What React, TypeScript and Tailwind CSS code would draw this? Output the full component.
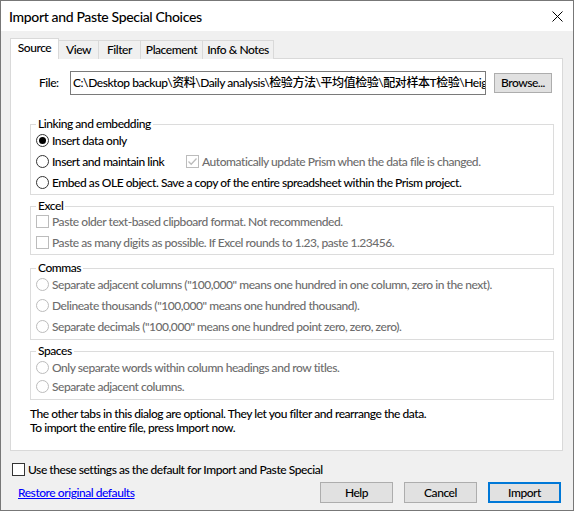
import clsx from "clsx";

const FILE_PATH =
  "C:\\Desktop backup\\资料\\Daily analysis\\检验方法\\平均值检验\\配对样本T检验\\Height.xlsx";

function Radio({ checked, disabled }: { checked?: boolean; disabled?: boolean }) {
  return (
    <span
      className={clsx(
        "flex h-[13px] w-[13px] shrink-0 items-center justify-center rounded-full border bg-white",
        disabled ? "border-[#bcbcbc]" : "border-[#333333]",
      )}
    >
      {checked && <span className="h-[7px] w-[7px] rounded-full bg-black" />}
    </span>
  );
}

function Check({ checked, disabled }: { checked?: boolean; disabled?: boolean }) {
  return (
    <span
      className={clsx(
        "flex h-[13px] w-[13px] shrink-0 items-center justify-center border bg-white",
        disabled ? "border-[#bcbcbc]" : "border-[#333333]",
      )}
    >
      {checked && (
        <svg width="11" height="11" viewBox="0 0 11 11">
          <path
            d="M1.5 5.5 L4.2 8.2 L9.5 2.5"
            fill="none"
            stroke={disabled ? "#bcbcbc" : "#000"}
            strokeWidth="1.3"
          />
        </svg>
      )}
    </span>
  );
}

function Option({
  kind,
  label,
  checked,
  disabled,
  short,
}: {
  kind: "radio" | "check";
  label: string;
  checked?: boolean;
  disabled?: boolean;
  short?: boolean;
}) {
  return (
    <div className={clsx("flex items-center gap-[3px]", short ? "h-[19px]" : "h-[21px]")}>
      {kind === "radio" ? (
        <Radio checked={checked} disabled={disabled} />
      ) : (
        <Check checked={checked} disabled={disabled} />
      )}
      <span className={clsx("whitespace-nowrap", disabled ? "text-[#6d6d6d]" : "text-black")}>
        {label}
      </span>
    </div>
  );
}

function Group({
  title,
  className,
  children,
}: {
  title: string;
  className: string;
  children: React.ReactNode;
}) {
  return (
    <fieldset className={clsx("border border-[#dcdcdc] px-[5px]", className)}>
      <legend className="px-[2px] leading-[16px]">{title}</legend>
      {children}
    </fieldset>
  );
}

const TABS = [
  { name: "View", width: "w-[40px]" },
  { name: "Filter", width: "w-[42px]" },
  { name: "Placement", width: "w-[62px]" },
  { name: "Info & Notes", width: "w-[71px]" },
];

function Button({ label, primary }: { label: string; primary?: boolean }) {
  return (
    <button
      className={clsx(
        "h-[21px] w-[73px] bg-[#e1e1e1] text-black",
        primary ? "border-2 border-[#0078d7]" : "border border-[#adadad]",
      )}
    >
      {label}
    </button>
  );
}

export default function App() {
  return (
    <div className="h-[511px] w-[574px] overflow-hidden border border-[#777777] bg-[#f0f0f0] font-['Lato','Noto_Sans_CJK_SC',sans-serif] text-[12px] font-medium tracking-[-0.45px] text-black">
      {/* title bar */}
      <div className="flex h-[30px] items-center justify-between bg-white pl-[8px] pr-[10px]">
        <span className="text-[14px] tracking-[-0.35px]">Import and Paste Special Choices</span>
        <svg width="11" height="11" viewBox="0 0 11 11">
          <path d="M0.5 0.5 L10.5 10.5 M10.5 0.5 L0.5 10.5" stroke="#000" strokeWidth="1" />
        </svg>
      </div>

      <div className="px-[9px] pt-[7px]">
        {/* tabs */}
        <div className="-mb-px flex items-end whitespace-nowrap">
          <div className="relative z-10 flex h-[21px] w-[49px] items-center justify-center border-x border-t border-[#d9d9d9] bg-white pb-[2px]">
            Source
          </div>
          {TABS.map((t) => (
            <div
              key={t.name}
              className={clsx(
                "flex h-[19px] items-center justify-center border-r border-t border-[#d9d9d9] bg-[#f0f0f0] pb-[1px]",
                t.width,
              )}
            >
              {t.name}
            </div>
          ))}
        </div>

        {/* panel */}
        <div className="h-[393px] w-[553px] border border-[#d9d9d9] bg-white pl-[19px] pr-[8px] pt-[12px]">
          <div className="ml-[9px] mr-[2px] flex items-center">
            <span className="w-[31px]">File:</span>
            <div className="flex h-[24px] w-[416px] items-center overflow-hidden whitespace-nowrap border border-[#7a7a7a] pl-[2px]">
              {FILE_PATH}
            </div>
            <button className="ml-[8px] h-[20px] w-[58px] border border-[#adadad] bg-[#e1e1e1]">
              Browse...
            </button>
          </div>

          <Group title="Linking and embedding" className="mt-[21px] h-[79px]">
            <div className="-mt-[2px]">
              <Option kind="radio" label="Insert data only" checked />
              <div className="flex items-center">
                <div className="w-[150px]">
                  <Option kind="radio" label="Insert and maintain link" />
                </div>
                <Option
                  kind="check"
                  label="Automatically update Prism when the data file is changed."
                  checked
                  disabled
                />
              </div>
              <Option
                kind="radio"
                label="Embed as OLE object. Save a copy of the entire spreadsheet within the Prism project."
              />
            </div>
          </Group>

          <Group title="Excel" className="mt-[3px] h-[57px]">
            <div className="-mt-[3px]">
              <Option kind="check" label="Paste older text-based clipboard format. Not recommended." disabled />
              <Option
                kind="check"
                label="Paste as many digits as possible. If Excel rounds to 1.23, paste 1.23456."
                disabled
              />
            </div>
          </Group>

          <Group title="Commas" className="mt-[5px] h-[80px]">
            <div className="-mt-[2px]">
              <Option
                kind="radio"
                label={'Separate adjacent columns ("100,000" means one hundred in one column, zero in the next).'}
                disabled
              />
              <Option
                kind="radio"
                label={'Delineate thousands ("100,000" means one hundred thousand).'}
                disabled
              />
              <Option
                kind="radio"
                label={'Separate decimals ("100,000" means one hundred point zero, zero, zero).'}
                disabled
              />
            </div>
          </Group>

          <Group title="Spaces" className="mt-[3px] h-[57px]">
            <div className="-mt-[1px]">
              <Option
                kind="radio"
                label="Only separate words within column headings and row titles."
                disabled
                short
              />
              <Option kind="radio" label="Separate adjacent columns." disabled short />
            </div>
          </Group>

          <p className="mt-[7px] leading-[14px]">
            The other tabs in this dialog are optional. They let you filter and rearrange the data.
            <br />
            To import the entire file, press Import now.
          </p>
        </div>
      </div>

      {/* footer */}
      <div className="mt-[12px] flex h-[13px] items-center gap-[3px] pl-[11px]">
        <Check />
        <span>Use these settings as the default for Import and Paste Special</span>
      </div>
      <div className="mt-[6px] flex h-[21px] items-center justify-between pl-[17px] pr-[12px]">
        <a className="text-[#0000ff] underline">Restore original defaults</a>
        <div className="flex gap-[11px]">
          <Button label="Help" />
          <Button label="Cancel" />
          <Button label="Import" primary />
        </div>
      </div>
    </div>
  );
}
